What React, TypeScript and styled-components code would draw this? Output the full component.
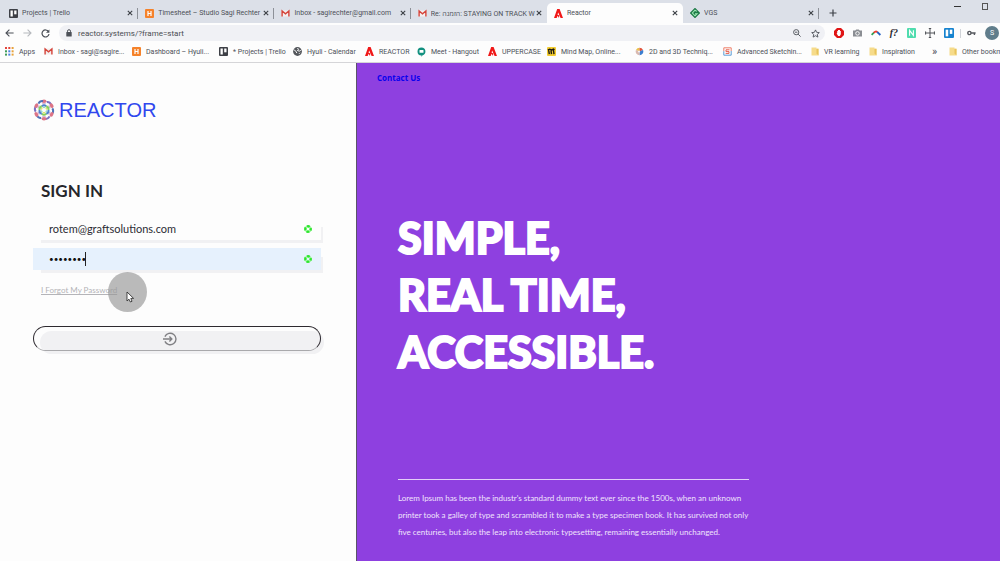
import React from "react";
import styled, { createGlobalStyle, css } from "styled-components";

const Global = createGlobalStyle`
  *, *::before, *::after { box-sizing: border-box; }
  html, body { margin: 0; }
  body { background: #fdfdfd; overflow-x: hidden; font-family: Roboto, "Open Sans", sans-serif; }
  button { font: inherit; padding: 0; border: 0; background: none; color: inherit; }
  svg { flex: 0 0 auto; }
`;

const Page = styled.div`
  min-height: 100vh;
  display: flex;
  flex-direction: column;
`;

const Strip = styled.div`
  display: flex;
  height: 23px;
  padding-left: 2px;
  background: #dce0e8;
  color: #4c5058;
`;

const Tab = styled.div<{ $active?: boolean; $line?: boolean }>`
  display: flex;
  align-items: center;
  gap: 4px;
  flex: 0 0 auto;
  width: 13.65%;
  margin-top: 3px;
  padding: 0 5px 0 7px;
  font-size: 7px;
  ${(p) => p.$line && css`
    background: linear-gradient(#8d9198, #8d9198) no-repeat right center / 1px 11px;
  `}
  ${(p) => p.$active && css`
    background: #fdfdfd;
    border-radius: 5px 5px 0 0;
  `}
`;

const TabTitle = styled.span`
  flex: 1;
  min-width: 0;
  margin-right: -3px;
  overflow: hidden;
  white-space: nowrap;
`;

const IconButton = styled.button`
  display: flex;
  align-items: center;
  justify-content: center;
  flex: 0 0 auto;
  color: #4c5058;
`;

const NewTab = styled(IconButton)`
  width: 28px;
  margin-top: 3px;
`;

const WindowButtons = styled.div`
  display: flex;
  align-items: flex-start;
  gap: 21px;
  margin-left: auto;
  padding: 2px 11px 0 0;
`;

const Toolbar = styled.div`
  display: flex;
  align-items: center;
  gap: 9px;
  height: 20px;
  padding: 0 1px 0 5px;
`;

const Address = styled.div`
  display: flex;
  align-items: center;
  flex: 1;
  gap: 10px;
  height: 16px;
  padding: 0 5px 0 7px;
  border-radius: 8px;
  background: #f0f1f5;
`;

const AddressInput = styled.input`
  flex: 1;
  min-width: 0;
  margin-left: -4px;
  padding: 0;
  border: 0;
  outline: 0;
  background: none;
  font: 8px Roboto, sans-serif;
  color: #4a4d52;
`;

const Extensions = styled.div`
  display: flex;
  align-items: center;
  gap: 9px;
`;

const Divider = styled.span`
  width: 1px;
  height: 9px;
  margin: 0 -3px;
  background: #d0d3d8;
`;

const Avatar = styled.button`
  && {
    width: 14px;
    height: 14px;
    border-radius: 50%;
    background: #607d8b;
    color: #fff;
    font-size: 7px;
  }
`;

const Bookmarks = styled.nav`
  display: flex;
  align-items: center;
  height: 20px;
  padding: 0 0 2px 5px;
  overflow: hidden;
  border-bottom: 1px solid #d5d5d8;
`;

const Bookmark = styled.a<{ $w: number; $more?: boolean }>`
  display: flex;
  align-items: center;
  gap: 5px;
  flex: 0 0 ${(p) => p.$w}px;
  color: #4c5058;
  font-size: ${(p) => (p.$more ? 11 : 7)}px;
  line-height: 12px;
  white-space: nowrap;
  text-decoration: none;
`;

const Split = styled.main`
  flex: 1;
  display: grid;
  grid-template-columns: 356fr 644fr;
`;

const SignInPane = styled.section`
  padding: 35px 35px 40px 33px;
`;

const Brand = styled.div`
  display: flex;
  align-items: center;
  gap: 4px;
  height: 24px;
  color: #3047ee;
  font: 20px/24px "Liberation Sans", Arial, sans-serif;
`;

const Form = styled.form`
  display: flex;
  flex-direction: column;
  isolation: isolate;
  margin-top: 57px;
  font-family: Lato, sans-serif;
`;

const FormTitle = styled.h1`
  margin: 0 0 15px 8px;
  color: #26262b;
  font: 700 17px/24px Lato, sans-serif;
`;

const Field = styled.label<{ $filled?: boolean }>`
  position: relative;
  display: flex;
  align-items: center;
  height: 22px;
  margin-bottom: 8px;
  padding: 0 9px 0 16px;
  background: ${(p) => (p.$filled ? "#e6f1fd" : "#fdfdfd")};
  box-shadow: 5px 6px 0 -3px #f1f1f3;
`;

const FieldInput = styled.input`
  flex: 1;
  min-width: 0;
  padding: 0;
  border: 0;
  outline: 0;
  background: none;
  color: #2c2c34;
  font: 11px/20px Lato, sans-serif;
  &[type="password"] {
    color: #111;
    font-size: 8px;
  }
`;

const Caret = styled.span`
  position: absolute;
  left: 52px;
  top: 4px;
  width: 1px;
  height: 14px;
  background: #222;
`;

const ForgotRow = styled.div`
  position: relative;
  display: flex;
`;

const Forgot = styled.a`
  margin: 5px 0 0 8px;
  color: #b4b4b8;
  font-size: 8px;
  line-height: 14px;
`;

const Pointer = styled.div`
  position: absolute;
  left: 75px;
  top: -6px;
  width: 39px;
  height: 40px;
  padding: 19px 0 0 18px;
  border-radius: 50%;
  background: rgba(150, 150, 150, 0.65);
  pointer-events: none;
  svg { display: block; }
`;

const Submit = styled.button`
  && {
    position: relative;
    display: flex;
    align-items: center;
    justify-content: center;
    height: 25px;
    margin-top: 29px;
    padding-right: 14px;
    border: 1px solid #2e2a30;
    border-bottom-color: #a9a9ac;
    border-radius: 13px;
    color: #808084;
  }
  &::before {
    content: "";
    position: absolute;
    z-index: -1;
    inset: 4px -4px -4px 6px;
    border-radius: 12px;
    background: #f1f1f3;
  }
`;

const Hero = styled.section`
  padding: 7px 40px 18px 20px;
  border-left: 1px solid #5b5468;
  background: #8e40e0;
  color: #fff;
`;

const Contact = styled.a`
  display: block;
  width: max-content;
  color: #0a00ee;
  font: 700 8px/16px "Open Sans", sans-serif;
  text-decoration: none;
`;

const HeroBody = styled.div`
  max-width: 372px;
  padding: 123px 0 0 21px;
`;

const HeroTitle = styled.h2`
  margin: 0;
  font: 900 43px/57px Lato, sans-serif;
  -webkit-text-stroke: 2px #fff;
  white-space: nowrap;
`;

const Blurb = styled.p`
  margin: 99px 0 0;
  padding-top: 10px;
  border-top: 1px solid #e3cff8;
  color: #f0e4fc;
  font: 8px/17px Lato, sans-serif;
  white-space: nowrap;
`;

const Line = styled.span`
  display: block;
`;

const FontMark = styled.span`
  font: italic 700 10px/12px "Liberation Serif", serif;
  color: #26282c;
`;

const TrelloIcon = ({ color = "#3e4046", size = 9 }: { color?: string; size?: number }) => (
  <svg width={size} height={size} viewBox="0 0 9 9">
    <rect width="9" height="9" rx="1" fill={color} />
    <rect x="1.5" y="1.5" width="2.3" height="6" fill="#fff" />
    <rect x="5.2" y="1.5" width="2.3" height="3.8" fill="#fff" />
  </svg>
);
const HarvestIcon = () => (
  <svg width="9" height="9" viewBox="0 0 9 9">
    <rect width="9" height="9" rx="1" fill="#f5822a" />
    <path d="M3 2v5M6 2v5M3 4.5h3" stroke="#fff" strokeWidth="1.2" />
  </svg>
);
const GmailIcon = () => (
  <svg width="9" height="9" viewBox="0 0 9 9">
    <rect x=".5" y="1.5" width="8" height="6" fill="#f3efef" />
    <path d="M1.1 7.5V2l3.4 2.8L7.9 2v5.5" fill="none" stroke="#d5443a" strokeWidth="1.4" />
  </svg>
);
const ReactorIcon = () => (
  <svg width="9" height="9" viewBox="0 0 9 9">
    <path d="M3.2 0h2.4L9 9H6.6L4.2 3.4 3.5 5.4l1.8 1L5 9H0Z" fill="#f01818" />
    <path d="M2.6 9l1-2.2L5 9Z" fill="#fff" />
  </svg>
);
const VgsIcon = () => (
  <svg width="10" height="10" viewBox="0 0 10 10">
    <path d="M5 .8L9.2 5 5 9.2.8 5Z" fill="#1d7a46" stroke="#1d7a46" strokeWidth="1.6" strokeLinejoin="round" />
    <path d="M6.8 3.4L5 2.2 2.4 5 5 7.8l2-2.1H5" fill="none" stroke="#9fe8b4" strokeWidth="1.1" />
  </svg>
);
const AppsIcon = () => (
  <svg width="9" height="9" viewBox="0 0 9 9">
    {["#e2453b", "#e2453b", "#e8a33a", "#3f9c58", "#4a7fe0", "#e8a33a", "#3f9c58", "#4a7fe0", "#e8a33a"].map((c, i) => (
      <rect key={i} x={(i % 3) * 3.3} y={Math.floor(i / 3) * 3.3} width="2" height="2" fill={c} />
    ))}
  </svg>
);
const GlobeIcon = () => (
  <svg width="9" height="9" viewBox="0 0 9 9">
    <circle cx="4.5" cy="4.5" r="4.4" fill="#54575c" />
    <path d="M1.2 3l2 1.5.6 1.6M4.4 1L5.6 2.4 4.4 3.4l1.8.8L7.8 3.4M6 6.8l1-1" fill="none" stroke="#fff" />
  </svg>
);
const MeetIcon = () => (
  <svg width="9" height="10" viewBox="0 0 9 10">
    <path d="M4.5.5a4 4 0 0 1 .8 7.9L4.5 10V8.5a4 4 0 0 1 0-8Z" fill="#12907f" />
    <rect x="2.5" y="3" width="4" height="2.8" rx=".6" fill="#fff" />
  </svg>
);
const MindIcon = () => (
  <svg width="9" height="9" viewBox="0 0 9 9">
    <rect width="9" height="9" rx="1" fill="#f3cc30" />
    <path d="M1.5 2l.8 5.2M3.8 2l.7 5.2M6.3 2l.7 5.2M1 3.2l1.6-1L4.7 3l1.8-.9 1 .8" fill="none" stroke="#1c1a12" strokeWidth="1.4" />
  </svg>
);
const BallIcon = () => (
  <svg width="9" height="9" viewBox="0 0 9 9">
    <path d="M4.5 4.5V.7A3.8 3.8 0 0 0 1 3Z" fill="#e9c04a" />
    <path d="M4.5 4.5V.7A3.8 3.8 0 0 1 8 3Z" fill="#e0533c" />
    <path d="M4.5 4.5L8 3a3.8 3.8 0 0 1-3.5 5.3Z" fill="#3b7ed0" />
    <path d="M4.5 4.5L1 3a3.8 3.8 0 0 0 3.5 5.3Z" fill="#d9b9b0" />
    <circle cx="4" cy="4.6" r="1" fill="#f4f4f8" />
  </svg>
);
const SketchIcon = () => (
  <svg width="9" height="9" viewBox="0 0 9 9" fill="none">
    <path d="M8.2 4V.8H.8v3.4" stroke="#ee7f68" />
    <path d="M.8 4.2v4h7.4V4" stroke="#5c9fd8" />
    <path d="M6.5 2.8H3v1.8h3v1.8H2.6" stroke="#e4604f" />
  </svg>
);
const FolderIcon = () => (
  <svg width="8" height="9" viewBox="0 0 8 9">
    <path d="M.5.5h5v1.3h2v6.7h-7Z" fill="#f6db8a" />
    <path d="M5.5.5v6l2 2V1.8h-2Z" fill="#e8c35c" />
  </svg>
);
const CloseIcon = () => (
  <svg width="6" height="6" viewBox="0 0 6 6">
    <path d="M.8.8l4.4 4.4M5.2.8L.8 5.2" stroke="#3c4046" strokeWidth="1.1" />
  </svg>
);
const ArrowIcon = ({ back }: { back?: boolean }) => (
  <svg width="9" height="8" viewBox="0 0 9 8" fill="none" stroke={back ? "#4c5058" : "#b6b9be"} strokeWidth="1.1">
    {back ? <path d="M8.6 4H1M4.4.6L1 4l3.4 3.4" /> : <path d="M.4 4H8M4.6.6L8 4 4.6 7.4" />}
  </svg>
);
const ReloadIcon = () => (
  <svg width="9" height="9" viewBox="0 0 9 9" fill="none">
    <path d="M7.5 2.6A3.5 3.5 0 1 0 8 5" stroke="#4c5058" strokeWidth="1.2" />
    <path d="M8.4.4v3.4H5Z" fill="#4c5058" />
  </svg>
);
const LockIcon = () => (
  <svg width="6" height="8" viewBox="0 0 6 8">
    <rect x=".3" y="3" width="5.4" height="4.6" rx=".5" fill="#4c5058" />
    <path d="M1.5 3.4V2.2a1.5 1.5 0 0 1 3 0v1.2" fill="none" stroke="#4c5058" />
  </svg>
);
const ZoomIcon = () => (
  <svg width="8" height="8" viewBox="0 0 8 8" fill="none" stroke="#5a5e64">
    <circle cx="3.2" cy="3.2" r="2.6" />
    <path d="M5.1 5.1L7.6 7.6M2 3.2h2.4" />
  </svg>
);
const StarIcon = () => (
  <svg width="9" height="9" viewBox="0 0 9 9" fill="none" stroke="#4c5058" strokeWidth=".9">
    <path d="M4.5.9l1.1 2.4 2.7.3-2 1.8.6 2.7-2.4-1.4-2.4 1.4.6-2.7-2-1.8 2.7-.3Z" />
  </svg>
);
const BlockIcon = () => (
  <svg width="10" height="10" viewBox="0 0 10 10">
    <path d="M3 0h4l3 3v4l-3 3H3L0 7V3Z" fill="#e01616" />
    <path d="M3.2 5V3h.8V2h2v1h.8v3.2L5.8 8H4.2L2.6 5.6Z" fill="#fff" />
  </svg>
);
const CameraIcon = () => (
  <svg width="9" height="8" viewBox="0 0 9 8">
    <path d="M0 1.6h2.3L3.2.4h2.6l.9 1.2H9v6H0Z" fill="#8b8e93" />
    <circle cx="4.5" cy="4.4" r="1.8" fill="none" stroke="#fff" strokeWidth=".9" />
  </svg>
);
const SwooshIcon = () => (
  <svg width="10" height="6" viewBox="0 0 10 6" fill="none" strokeWidth="1.8">
    <path d="M.6 4.8L3.2 2.4" stroke="#2fa055" />
    <path d="M2.8 2.8Q4.6.6 6.4 2.2" stroke="#ee3c2c" />
    <path d="M6.2 2L9.4 5" stroke="#2560c0" />
  </svg>
);
const NimbusIcon = () => (
  <svg width="9" height="10" viewBox="0 0 9 10">
    <rect width="9" height="10" rx="1" fill="#4fdcae" />
    <path d="M2.6 7.8V2.4l3.8 5V2.2" fill="none" stroke="#fff" strokeWidth="1.1" />
  </svg>
);
const CrossIcon = () => (
  <svg width="10" height="10" viewBox="0 0 10 10" fill="none" stroke="#505358">
    <path d="M5 0v10M0 5h10M.6 3.4v3.2M9.4 3.4v3.2M3.8.5h2.4M3.8 9.5h2.4" />
  </svg>
);
const KeyIcon = () => (
  <svg width="9" height="6" viewBox="0 0 9 6" fill="none" stroke="#55585e" strokeWidth="1.4">
    <circle cx="2.4" cy="3" r="1.6" />
    <path d="M4 3h4.6M7.4 3v2" />
  </svg>
);
const AtomLogo = () => (
  <svg width="22" height="22" viewBox="0 0 22 22" fill="none">
    {[0, 60, 120, 180, 240, 300].map((a, i) => (
      <g key={a} transform={`rotate(${a} 11 11)`}>
        <ellipse cx="11" cy="2.2" rx="2.5" ry="1.7" fill="#dd7486" />
        <path d="M9.4 4.4Q11 5.4 12.6 4.4" stroke="#c9a4cf" />
        <path d="M13.8 3Q17 2.8 18.2 5.8" stroke={i % 2 ? "#4f72b8" : "#7a70c0"} strokeWidth="2" />
        <path d="M8.8 7.2Q11 5.2 13.2 7.2" stroke={i % 2 ? "#86d060" : "#4f83cf"} strokeWidth="2" />
        <path d="M10 8.7Q11 7.8 12 8.7" stroke={i % 2 ? "#e4e06a" : "#93dcc0"} strokeWidth="1.3" />
      </g>
    ))}
  </svg>
);
const ValidIcon = () => (
  <svg width="8" height="8" viewBox="0 0 8 8" fill="none">
    <circle cx="4" cy="4" r="2.7" stroke="#9cf59c" strokeWidth="1.8" />
    <circle cx="4" cy="4" r="2.7" stroke="#2de62d" strokeWidth="2.4" strokeDasharray="2.8 1.44" strokeDashoffset="1.4" />
  </svg>
);
const EnterIcon = () => (
  <svg width="14" height="14" viewBox="0 0 14 14" fill="none" stroke="currentColor" strokeWidth="1.4">
    <path d="M1.9 4.6A5.8 5.8 0 1 1 1.9 9.4" />
    <path d="M0 7h8.6M6.4 4.6L8.8 7 6.4 9.4" />
  </svg>
);

const tabs = [
  { title: "Projects | Trello", icon: <TrelloIcon />, line: true },
  { title: "Timesheet – Studio Sagi Rechter", icon: <HarvestIcon />, line: true },
  { title: "Inbox - sagirechter@gmail.com", icon: <GmailIcon />, line: true },
  { title: "Re: הזמנה: STAYING ON TRACK W", icon: <GmailIcon /> },
  { title: "Reactor", icon: <ReactorIcon />, active: true },
  { title: "VGS", icon: <VgsIcon />, line: true },
];

const bookmarks = [
  { title: "Apps", icon: <AppsIcon />, w: 39 },
  { title: "Inbox - sagi@sagire...", icon: <GmailIcon />, w: 88 },
  { title: "Dashboard – Hyuli...", icon: <HarvestIcon />, w: 87 },
  { title: "* Projects | Trello", icon: <TrelloIcon />, w: 74 },
  { title: "Hyuli - Calendar", icon: <GlobeIcon />, w: 72 },
  { title: "REACTOR", icon: <ReactorIcon />, w: 52 },
  { title: "Meet - Hangout", icon: <MeetIcon />, w: 71 },
  { title: "UPPERCASE", icon: <ReactorIcon />, w: 59 },
  { title: "Mind Map, Online...", icon: <MindIcon />, w: 88 },
  { title: "2D and 3D Techniq...", icon: <BallIcon />, w: 88 },
  { title: "Advanced Sketchin...", icon: <SketchIcon />, w: 88 },
  { title: "VR learning", icon: <FolderIcon />, w: 58 },
  { title: "Inspiration", icon: <FolderIcon />, w: 63 },
  { title: "»", w: 17, more: true },
  { title: "Other bookmarks", icon: <FolderIcon />, w: 80 },
];

export default function App() {
  return (
    <Page>
      <Global />
      <header>
        <Strip>
          {tabs.map((t) => (
            <Tab key={t.title} $active={t.active} $line={t.line}>
              {t.icon}
              <TabTitle>{t.title}</TabTitle>
              <IconButton aria-label="Close tab"><CloseIcon /></IconButton>
            </Tab>
          ))}
          <NewTab aria-label="New tab">
            <svg width="8" height="8" viewBox="0 0 8 8"><path d="M4 .5v7M.5 4h7" stroke="#3c4046" strokeWidth="1.2" /></svg>
          </NewTab>
          <WindowButtons>
            <IconButton aria-label="Minimize">
              <svg width="7" height="9" viewBox="0 0 7 9"><path d="M0 4.5h7" stroke="#333" /></svg>
            </IconButton>
            <IconButton aria-label="Maximize">
              <svg width="7" height="9" viewBox="0 0 7 9"><rect x=".5" y="1.5" width="5" height="6" fill="none" stroke="#555" /></svg>
            </IconButton>
          </WindowButtons>
        </Strip>
        <Toolbar>
          <IconButton aria-label="Back"><ArrowIcon back /></IconButton>
          <IconButton aria-label="Forward"><ArrowIcon /></IconButton>
          <IconButton aria-label="Reload"><ReloadIcon /></IconButton>
          <Address>
            <LockIcon />
            <AddressInput aria-label="Address" defaultValue="reactor.systems/?frame=start" />
            <IconButton aria-label="Zoom"><ZoomIcon /></IconButton>
            <IconButton aria-label="Bookmark this page"><StarIcon /></IconButton>
          </Address>
          <Extensions>
            <BlockIcon />
            <CameraIcon />
            <SwooshIcon />
            <FontMark>f?</FontMark>
            <NimbusIcon />
            <CrossIcon />
            <TrelloIcon color="#1683cf" size={10} />
            <Divider />
            <KeyIcon />
            <Avatar aria-label="Profile">S</Avatar>
          </Extensions>
        </Toolbar>
        <Bookmarks>
          {bookmarks.map((b) => (
            <Bookmark key={b.title} href="#" $w={b.w} $more={b.more}>
              {b.icon}
              <span>{b.title}</span>
            </Bookmark>
          ))}
        </Bookmarks>
      </header>
      <Split>
        <SignInPane>
          <Brand><AtomLogo />REACTOR</Brand>
          <Form onSubmit={(e) => e.preventDefault()}>
            <FormTitle>SIGN IN</FormTitle>
            <Field>
              <FieldInput type="email" aria-label="Email" defaultValue="rotem@graftsolutions.com" />
              <ValidIcon />
            </Field>
            <Field $filled>
              <FieldInput type="password" aria-label="Password" defaultValue="password" />
              <Caret />
              <ValidIcon />
            </Field>
            <ForgotRow>
              <Forgot href="#">I Forgot My Password</Forgot>
              <Pointer>
                <svg width="9" height="12" viewBox="0 0 9 12">
                  <path d="M1 1v9l2-1.8L4.4 11l1.6-.7L4.8 7.4h2.8Z" fill="#fff" stroke="#222" strokeWidth=".8" />
                </svg>
              </Pointer>
            </ForgotRow>
            <Submit type="submit" aria-label="Sign in"><EnterIcon /></Submit>
          </Form>
        </SignInPane>
        <Hero>
          <Contact href="#">Contact Us</Contact>
          <HeroBody>
            <HeroTitle>
              <Line>SIMPLE,</Line>
              <Line>REAL TIME,</Line>
              <Line>ACCESSIBLE.</Line>
            </HeroTitle>
            <Blurb>
              <Line>Lorem Ipsum has been the industr's standard dummy text ever since the 1500s, when an unknown</Line>
              <Line>printer took a galley of type and scrambled it to make a type specimen book. It has survived not only</Line>
              <Line>five centuries, but also the leap into electronic typesetting, remaining essentially unchanged.</Line>
            </Blurb>
          </HeroBody>
        </Hero>
      </Split>
    </Page>
  );
}
